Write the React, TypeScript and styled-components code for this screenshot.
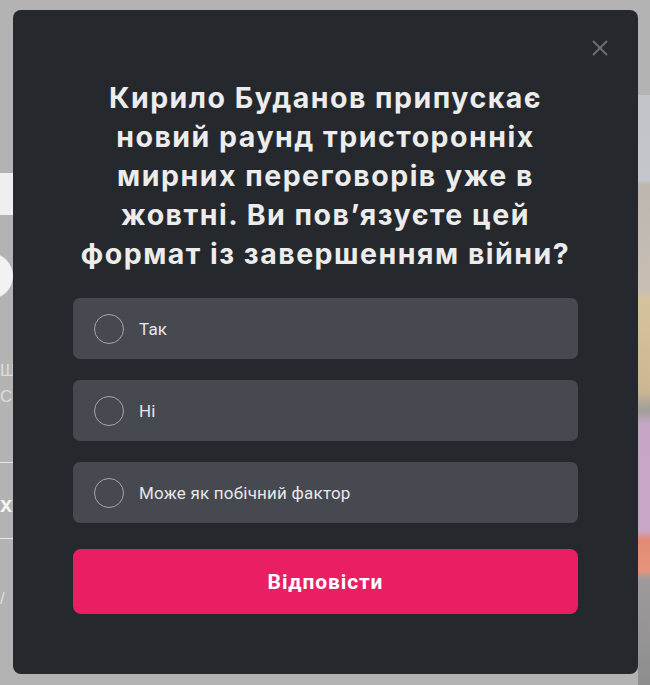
import React from 'react'
import styled, { createGlobalStyle } from 'styled-components'

const GlobalStyle = createGlobalStyle`
  * { box-sizing: border-box; }
  html, body { margin: 0; padding: 0; }
  body {
    background: #b3b3b3;
    font-family: 'Inter', 'Noto Sans', sans-serif;
    overflow: hidden;
  }
`

const Page = styled.div`
  width: 650px;
  height: 685px;
  display: flex;
  justify-content: space-between;
  background: #b3b3b3;
`

const LeftRail = styled.div`
  width: 60px;
  display: flex;
  flex-direction: column;
  font-family: 'Liberation Sans', sans-serif;
  color: #e4e4e4;
`

const Block = styled.div<{ $h: number; $top: number }>`
  height: ${(p) => p.$h}px;
  margin-top: ${(p) => p.$top}px;
  background: #efefef;
  flex-shrink: 0;
`

const Dot = styled.div`
  width: 46px;
  height: 46px;
  margin: 38px 0 0 -33px;
  border-radius: 50%;
  background: #f2f2f2;
  flex-shrink: 0;
`

const RailText = styled.div<{ $top: number; $bold?: boolean }>`
  margin-top: ${(p) => p.$top}px;
  font-size: ${(p) => (p.$bold ? 22 : 17)}px;
  font-weight: ${(p) => (p.$bold ? 700 : 400)};
  line-height: 20px;
  white-space: nowrap;
  color: ${(p) => (p.$bold ? '#f4f4f4' : '#dcdcdc')};
`

const Rule = styled.div<{ $top: number }>`
  margin-top: ${(p) => p.$top}px;
  height: 1px;
  background: #e6e6e6;
  flex-shrink: 0;
`

const RightRail = styled.div`
  width: 12px;
  background: linear-gradient(
    to bottom,
    #b3b3b3 0px,
    #b3b3b3 95px,
    #c0c3c8 95px,
    #c3c6ca 180px,
    #bcb6ae 185px,
    #c7bfb4 290px,
    #d5c29c 300px,
    #cdb793 390px,
    #a09e9a 410px,
    #c6a6c7 425px,
    #c8a6c8 530px,
    #e28a74 540px,
    #e6947c 570px,
    #9e9a9c 580px,
    #8e8e8e 685px
  );
`

const Overlay = styled.div`
  position: fixed;
  inset: 0;
  display: flex;
  align-items: flex-start;
  padding: 10px 12px 0 13px;
`

const Modal = styled.div`
  position: relative;
  width: 625px;
  background: #25292d;
  border-radius: 8px;
  padding: 68px 60px 60px;
  display: flex;
  flex-direction: column;
`

const CloseButton = styled.button`
  position: absolute;
  top: 20px;
  right: 20px;
  width: 36px;
  height: 36px;
  padding: 0;
  border: 0;
  background: none;
  display: flex;
  align-items: center;
  justify-content: center;
  cursor: pointer;
`

const Title = styled.h2`
  margin: 0;
  font-family: 'Inter', 'Noto Sans', sans-serif;
  font-weight: 700;
  font-size: 28.5px;
  letter-spacing: 1.5px;
  line-height: 39px;
  text-align: center;
  color: #ececec;
  white-space: nowrap;
`

const Options = styled.div`
  margin-top: 25px;
  display: flex;
  flex-direction: column;
  gap: 21px;
`

const Option = styled.label`
  height: 61px;
  display: flex;
  align-items: center;
  gap: 15px;
  padding-left: 21px;
  background: #46494f;
  border-radius: 7px;
  cursor: pointer;
`

const Radio = styled.span`
  width: 30px;
  height: 30px;
  border-radius: 50%;
  border: 1px solid #a4a6a9;
  flex-shrink: 0;
`

const OptionText = styled.span`
  font-family: Roboto, 'Liberation Sans', sans-serif;
  font-size: 17px;
  font-weight: 400;
  letter-spacing: 0.2px;
  color: #e6e7e8;
`

const Submit = styled.button`
  margin-top: 26px;
  height: 65px;
  border: 0;
  border-radius: 8px;
  background: #e91e63;
  color: #ffffff;
  font-family: Roboto, 'Liberation Sans', sans-serif;
  font-weight: 700;
  font-size: 21px;
  letter-spacing: 0.9px;
  cursor: pointer;
`

const answers = ['Так', 'Ні', 'Може як побічний фактор']

export default function App() {
  return (
    <>
      <GlobalStyle />
      <Page>
        <LeftRail>
          <Block $top={173} $h={42} />
          <Dot />
          <RailText $top={62}>Ш</RailText>
          <RailText $top={6}>СЯ</RailText>
          <Rule $top={55} />
          <RailText $top={32} $bold>х</RailText>
          <Rule $top={23} />
          <RailText $top={50}>/</RailText>
        </LeftRail>
        <RightRail />
      </Page>
      <Overlay>
        <Modal>
          <CloseButton aria-label="Закрити">
            <svg width="16" height="16" viewBox="0 0 16 16">
              <path d="M1 1L15 15M15 1L1 15" stroke="#6d7176" strokeWidth="1.8" fill="none" />
            </svg>
          </CloseButton>
          <Title>
            Кирило Буданов припускає
            <br />
            новий раунд тристоронніх
            <br />
            мирних переговорів уже в
            <br />
            жовтні. Ви пов’язуєте цей
            <br />
            формат із завершенням війни?
          </Title>
          <Options>
            {answers.map((a) => (
              <Option key={a}>
                <Radio />
                <OptionText>{a}</OptionText>
              </Option>
            ))}
          </Options>
          <Submit>Відповісти</Submit>
        </Modal>
      </Overlay>
    </>
  )
}
